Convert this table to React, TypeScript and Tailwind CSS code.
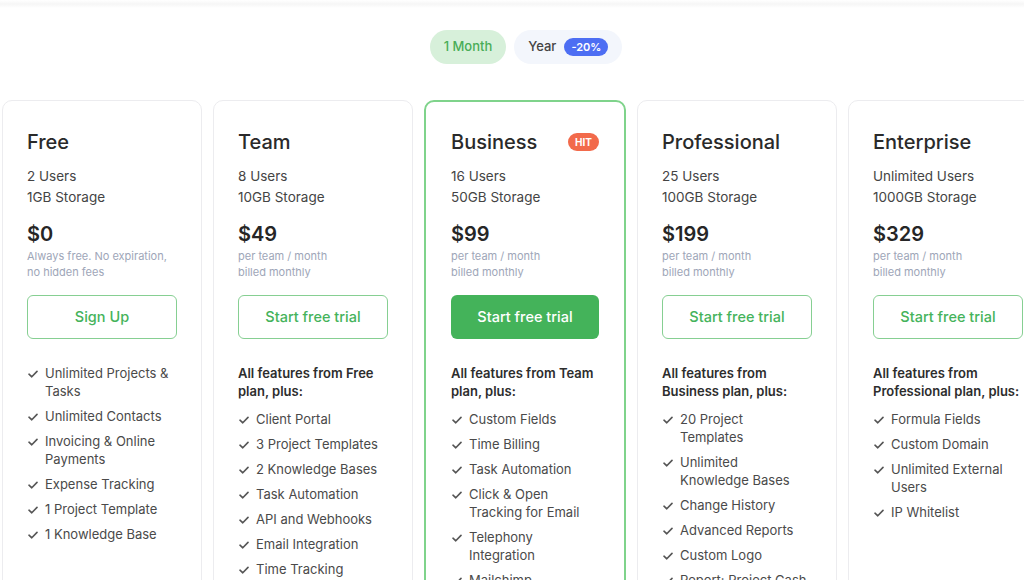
import React from "react"

type Plan = {
  name: string
  users: string
  storage: string
  price: string
  note: string[]
  cta: string
  featured?: boolean
  heading?: string[]
  features: string[][]
}

const PLANS: Plan[] = [
  {
    name: "Free",
    users: "2 Users",
    storage: "1GB Storage",
    price: "$0",
    note: ["Always free. No expiration,", "no hidden fees"],
    cta: "Sign Up",
    features: [
      ["Unlimited Projects &", "Tasks"],
      ["Unlimited Contacts"],
      ["Invoicing & Online", "Payments"],
      ["Expense Tracking"],
      ["1 Project Template"],
      ["1 Knowledge Base"],
    ],
  },
  {
    name: "Team",
    users: "8 Users",
    storage: "10GB Storage",
    price: "$49",
    note: ["per team / month", "billed monthly"],
    cta: "Start free trial",
    heading: ["All features from Free", "plan, plus:"],
    features: [
      ["Client Portal"],
      ["3 Project Templates"],
      ["2 Knowledge Bases"],
      ["Task Automation"],
      ["API and Webhooks"],
      ["Email Integration"],
      ["Time Tracking"],
    ],
  },
  {
    name: "Business",
    users: "16 Users",
    storage: "50GB Storage",
    price: "$99",
    note: ["per team / month", "billed monthly"],
    cta: "Start free trial",
    featured: true,
    heading: ["All features from Team", "plan, plus:"],
    features: [
      ["Custom Fields"],
      ["Time Billing"],
      ["Task Automation"],
      ["Click & Open", "Tracking for Email"],
      ["Telephony", "Integration"],
      ["Mailchimp", "Integration"],
    ],
  },
  {
    name: "Professional",
    users: "25 Users",
    storage: "100GB Storage",
    price: "$199",
    note: ["per team / month", "billed monthly"],
    cta: "Start free trial",
    heading: ["All features from", "Business plan, plus:"],
    features: [
      ["20 Project", "Templates"],
      ["Unlimited", "Knowledge Bases"],
      ["Change History"],
      ["Advanced Reports"],
      ["Custom Logo"],
      ["Report: Project Cash", "Flow"],
    ],
  },
  {
    name: "Enterprise",
    users: "Unlimited Users",
    storage: "1000GB Storage",
    price: "$329",
    note: ["per team / month", "billed monthly"],
    cta: "Start free trial",
    heading: ["All features from", "Professional plan, plus:"],
    features: [
      ["Formula Fields"],
      ["Custom Domain"],
      ["Unlimited External", "Users"],
      ["IP Whitelist"],
    ],
  },
]

function Check() {
  return (
    <svg width="10" height="8" viewBox="0 0 10 8" className="mt-[6px] ml-[1px] shrink-0">
      <path d="M1 4.2 L3.8 6.8 L9 1.4" fill="none" stroke="#555" strokeWidth="1.6" strokeLinecap="round" strokeLinejoin="round" />
    </svg>
  )
}

function PlanCard({ plan }: { plan: Plan }) {
  return (
    <div
      className={
        plan.featured
          ? "min-h-[520px] w-[202px] shrink-0 rounded-[10px] border-2 border-[#7fd38b] bg-white pl-[25px] pr-[25px] pt-[26px]"
          : "min-h-[520px] w-[200px] shrink-0 rounded-[10px] border border-[#ececef] bg-white pl-[24px] pr-[24px] pt-[27px]"
      }
    >
      {/* Header */}
      <div className="flex items-center justify-between">
        <h3 className="text-[20px] leading-[28px] font-medium text-[#2a2a2a]">{plan.name}</h3>
        {plan.featured && (
          <span className="rounded-full bg-[#f26a4b] px-[7px] text-[10px] leading-[18px] font-bold text-white">HIT</span>
        )}
      </div>
      <div className="mt-[10px] text-[13.5px] leading-[21px] text-[#444]">
        <p>{plan.users}</p>
        <p>{plan.storage}</p>
      </div>
      <p className="mt-[12px] text-[20px] leading-[28px] font-semibold text-[#262626]">{plan.price}</p>
      <div className="text-[11px] leading-[16px] text-[#9ea6b8]">
        {plan.note.map((n) => (
          <p key={n}>{n}</p>
        ))}
      </div>
      <button
        className={
          plan.featured
            ? "mt-[15px] h-[44px] w-full rounded-[6px] bg-[#44b35a] text-[14.5px] font-medium text-white"
            : "mt-[15px] h-[44px] w-full rounded-[6px] border border-[#86cf92] bg-white text-[14.5px] font-medium text-[#45b35b]"
        }
      >
        {plan.cta}
      </button>

      {/* Features */}
      <div className="mt-[25px]">
        {plan.heading && (
          <p className="mb-[10px] text-[13px] leading-[18px] font-semibold text-[#2d2d2d]">
            {plan.heading.map((h, i) => (
              <span key={i} className="block">
                {h}
              </span>
            ))}
          </p>
        )}
        <ul className="flex flex-col gap-[7px]">
          {plan.features.map((f, i) => (
            <li key={i} className="flex items-start gap-[7px] text-[13px] leading-[18px] text-[#4a4a4a]">
              <Check />
              <span>
                {f.map((line, j) => (
                  <span key={j} className="block whitespace-nowrap">
                    {line}
                  </span>
                ))}
              </span>
            </li>
          ))}
        </ul>
      </div>
    </div>
  )
}

export default function App() {
  return (
    <div className="h-[580px] w-[1024px] overflow-hidden bg-white" style={{ fontFamily: "Inter, 'Noto Sans', sans-serif" }}>
      <div className="h-[8px] bg-gradient-to-b from-white via-[#f6f6f6] to-white" />
      <div className="w-[1052px]">
        {/* Billing toggle */}
        <div className="mt-[22px] flex justify-center gap-[8px]">
          <button className="h-[34px] rounded-full bg-[#d7f0da] px-[14px] text-[13px] font-medium text-[#49ad57]">1 Month</button>
          <button className="flex h-[34px] items-center gap-[8px] rounded-full bg-[#f3f6fc] pl-[14px] pr-[14px] text-[13px] font-medium text-[#444]">
            Year
            <span className="rounded-full bg-[#4d6ef3] px-[7px] text-[11px] leading-[18px] font-semibold text-white">-20%</span>
          </button>
        </div>

        {/* Plans */}
        <div className="mt-[36px] flex items-start gap-[11px] pl-[2px]">
          {PLANS.map((p) => (
            <PlanCard key={p.name} plan={p} />
          ))}
        </div>
      </div>
    </div>
  )
}
